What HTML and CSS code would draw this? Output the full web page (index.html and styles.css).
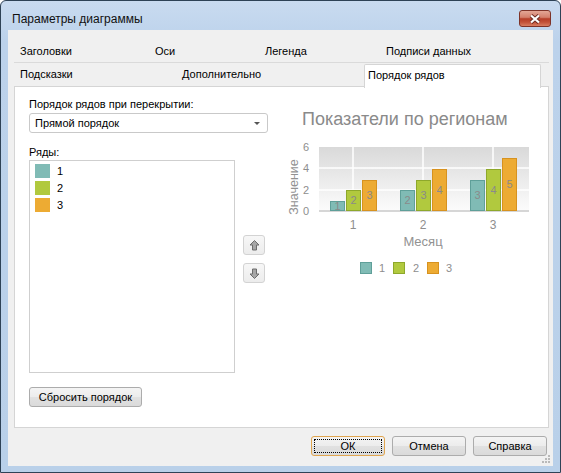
FILE: index.html
```html
<!DOCTYPE html>
<html lang="ru">
<head>
<meta charset="utf-8">
<title>Параметры диаграммы</title>
<link rel="stylesheet" href="styles.css">
</head>
<body>
<div class="window">
  <div class="titlebar">
    <span class="title">Параметры диаграммы</span>
    <button class="close" aria-label="Закрыть">
      <svg width="14" height="10" viewBox="0 0 14 10">
        <path class="x-shadow" d="M3 1.5 L11 8.5 M11 1.5 L3 8.5"/>
        <path class="x-fg" d="M3 1.5 L11 8.5 M11 1.5 L3 8.5"/>
      </svg>
    </button>
  </div>
  <div class="client">
    <div class="tabrow row1">
      <div class="tab">Заголовки</div>
      <div class="tab">Оси</div>
      <div class="tab">Легенда</div>
      <div class="tab">Подписи данных</div>
    </div>
    <div class="tabrow row2">
      <div class="tab">Подсказки</div>
      <div class="tab">Дополнительно</div>
      <div class="tab sel">Порядок рядов</div>
      <div></div>
    </div>
    <div class="panel">
      <div class="leftcol">
        <div class="lbl">Порядок рядов при перекрытии:</div>
        <div class="combo"><span>Прямой порядок</span><span class="arrow"></span></div>
        <div class="lbl lbl2">Ряды:</div>
        <div class="listrow">
          <div class="listbox">
            <div class="item"><span class="sw teal"></span>1</div>
            <div class="item"><span class="sw green"></span>2</div>
            <div class="item"><span class="sw orange"></span>3</div>
          </div>
          <div class="movebtns">
            <button class="mbtn" aria-label="Вверх">
              <svg width="11" height="11" viewBox="0 0 11 11"><polygon class="arr" points="5.5,0.5 10,5 7.5,5 7.5,10 3.5,10 3.5,5 1,5"/></svg>
            </button>
            <button class="mbtn" aria-label="Вниз">
              <svg width="11" height="11" viewBox="0 0 11 11"><polygon class="arr" points="5.5,10.5 10,6 7.5,6 7.5,1 3.5,1 3.5,6 1,6"/></svg>
            </button>
          </div>
        </div>
        <button class="btn reset">Сбросить порядок</button>
      </div>
      <svg class="chart" width="260" height="190" viewBox="0 0 260 190">
        <defs>
          <linearGradient id="pg" x1="0" y1="0" x2="0" y2="1">
            <stop offset="0" stop-color="#d9d9d9"/>
            <stop offset="1" stop-color="#fcfcfc"/>
          </linearGradient>
        </defs>
        <text class="ct" x="17" y="25">Показатели по регионам</text>
        <rect x="34" y="47" width="210" height="64" fill="url(#pg)"/>
        <g class="grid">
          <line x1="34" y1="68" x2="244" y2="68"/>
          <line x1="34" y1="90" x2="244" y2="90"/>
          <line x1="68" y1="47" x2="68" y2="111"/>
          <line x1="138" y1="47" x2="138" y2="111"/>
          <line x1="208" y1="47" x2="208" y2="111"/>
        </g>
        <line class="axis" x1="34" y1="111" x2="244" y2="111"/>
        <g class="ax ya">
          <text x="24" y="51">6</text>
          <text x="24" y="72">4</text>
          <text x="24" y="94">2</text>
          <text x="24" y="115">0</text>
        </g>
        <text class="at yt" transform="translate(12.5,87) rotate(-90)">Значение</text>
        <g class="bars">
          <rect class="b1" x="45.5" y="101.5" width="14" height="9"/>
          <rect class="b2" x="61.5" y="90.5" width="14" height="20"/>
          <rect class="b3" x="77.5" y="80.5" width="14" height="30"/>
          <rect class="b1" x="115.5" y="90.5" width="14" height="20"/>
          <rect class="b2" x="131.5" y="80.5" width="14" height="30"/>
          <rect class="b3" x="147.5" y="69.5" width="14" height="41"/>
          <rect class="b1" x="185.5" y="80.5" width="14" height="30"/>
          <rect class="b2" x="201.5" y="69.5" width="14" height="41"/>
          <rect class="b3" x="217.5" y="58.5" width="14" height="52"/>
        </g>
        <g class="bl">
          <text x="52.5" y="109.5">1</text>
          <text x="68.5" y="104">2</text>
          <text x="84.5" y="99">3</text>
          <text x="122.5" y="104">2</text>
          <text x="138.5" y="99">3</text>
          <text x="154.5" y="93.5">4</text>
          <text x="192.5" y="99">3</text>
          <text x="208.5" y="93.5">4</text>
          <text x="224.5" y="88">5</text>
        </g>
        <g class="ax xa">
          <text x="68" y="129">1</text>
          <text x="138" y="129">2</text>
          <text x="208" y="129">3</text>
        </g>
        <text class="at" x="138" y="145.5">Месяц</text>
        <g class="bars">
          <rect class="b1" x="75.5" y="162.5" width="11" height="11"/>
          <rect class="b2" x="108.5" y="162.5" width="11" height="11"/>
          <rect class="b3" x="142.5" y="162.5" width="11" height="11"/>
        </g>
        <g class="lg">
          <text x="94" y="172">1</text>
          <text x="128" y="172">2</text>
          <text x="161" y="172">3</text>
        </g>
      </svg>
    </div>
    <div class="footer">
      <button class="btn dlg ok">ОК</button>
      <button class="btn dlg">Отмена</button>
      <button class="btn dlg">Справка</button>
    </div>
    <svg class="grip" width="9" height="9" viewBox="0 0 9 9">
      <rect x="7" y="1" width="2" height="2"/>
      <rect x="4" y="4" width="2" height="2"/>
      <rect x="7" y="4" width="2" height="2"/>
      <rect x="1" y="7" width="2" height="2"/>
      <rect x="4" y="7" width="2" height="2"/>
      <rect x="7" y="7" width="2" height="2"/>
    </svg>
  </div>
</div>
</body>
</html>
```

FILE: styles.css
```css
* { box-sizing: border-box; }

html, body {
  margin: 0;
  padding: 0;
}

body {
  width: 561px;
  height: 473px;
  overflow: hidden;
  font-family: "Liberation Sans", Arial, sans-serif;
  font-size: 11px;
  color: #000;
  background: #fff;
}

.window {
  width: 561px;
  height: 473px;
  border: 1px solid #2e4256;
  border-radius: 6px 6px 0 0;
  background: linear-gradient(#c9dbf0 0px, #bcd2eb 40px, #b9d0e9 100%);
  padding: 0 7px 6px 7px;
  display: flex;
  flex-direction: column;
}

.titlebar {
  height: 29px;
  flex: none;
  display: flex;
  align-items: flex-start;
  justify-content: space-between;
}

.title {
  font-size: 12px;
  line-height: 15px;
  margin-top: 11px;
  margin-left: 4px;
  color: #111;
}

.close {
  margin-top: 9px;
  margin-right: 2px;
  width: 32px;
  height: 17px;
  padding: 0;
  border: 1px solid #7e3328;
  border-radius: 3px;
  background: linear-gradient(#e3a695 0%, #d4806c 42%, #b63e28 52%, #c3533a 75%, #d87e62 100%);
  display: flex;
  align-items: center;
  justify-content: center;
}

.x-shadow {
  fill: none;
  stroke: #6b2b22;
  stroke-width: 4;
}

.x-fg {
  fill: none;
  stroke: #ffffff;
  stroke-width: 2.2;
}

.client {
  flex: 1;
  position: relative;
  background: #f0f0f0;
  padding: 10px 4px 10px 6px;
  display: flex;
  flex-direction: column;
}

.tabrow {
  display: grid;
  height: 23px;
  flex: none;
}

.row1 {
  grid-template-columns: 135px 110px 121px 1fr;
  border-bottom: 1px solid #dadada;
}

.row2 {
  grid-template-columns: 162px 188px 177px 1fr;
}

.tab {
  padding-left: 6px;
  line-height: 22px;
  white-space: nowrap;
}

.row2 .tab {
  line-height: 23px;
}

.row2 .tab.sel {
  position: relative;
  z-index: 1;
  margin-top: 1px;
  height: 24px;
  line-height: 21px;
  padding-left: 3px;
  background: #fff;
  border: 1px solid #d5d5d5;
  border-bottom: none;
  border-radius: 2px 2px 0 0;
}

.panel {
  height: 342px;
  flex: none;
  background: #fff;
  border: 1px solid #d5d5d5;
  display: flex;
  align-items: flex-start;
  padding: 11px 0 0 14px;
}

.leftcol {
  width: 239px;
  display: flex;
  flex-direction: column;
  align-items: flex-start;
}

.lbl {
  line-height: 13px;
  white-space: nowrap;
}

.lbl2 {
  margin-top: 13px;
}

.combo {
  margin-top: 2px;
  width: 239px;
  height: 20px;
  border: 1px solid #c9c9c9;
  border-radius: 3px;
  background: #fff;
  display: flex;
  align-items: center;
  justify-content: space-between;
  padding: 0 7px 0 5px;
}

.arrow {
  width: 0;
  height: 0;
  border-left: 3px solid transparent;
  border-right: 3px solid transparent;
  border-top: 3px solid #555;
}

.listrow {
  margin-top: 1px;
  display: flex;
}

.listbox {
  width: 206px;
  height: 213px;
  border: 1px solid #cfcfcf;
  background: #fff;
  padding: 1px 0 0 5px;
}

.item {
  height: 17px;
  display: flex;
  align-items: center;
}

.sw {
  width: 15px;
  height: 14px;
  margin-right: 7px;
}

.teal { background: #80bbb5; }
.green { background: #b1c93e; }
.orange { background: #edab33; }

.movebtns {
  margin-left: 8px;
  padding-top: 75px;
  display: flex;
  flex-direction: column;
  gap: 8px;
}

.mbtn {
  width: 22px;
  height: 20px;
  padding: 0;
  border: 1px solid #d3d3d3;
  border-radius: 3px;
  background: linear-gradient(#f7f7f7, #ececec);
  display: flex;
  align-items: center;
  justify-content: center;
}

.arr {
  fill: #a6a6a6;
  stroke: #6c6c6c;
  stroke-width: 1;
  stroke-linejoin: round;
}

.btn {
  font: inherit;
  color: #000;
  height: 20px;
  padding: 0;
  border: 1px solid #acacac;
  border-radius: 3px;
  background: linear-gradient(#f4f4f4 0%, #ececec 50%, #e1e1e1 51%, #dadada 100%);
}

.reset {
  margin-top: 14px;
  width: 113px;
}

.chart {
  flex: none;
  margin-left: 17px;
  margin-top: 2px;
  display: block;
}

.chart text {
  font-family: "Liberation Sans", Arial, sans-serif;
}

.ct {
  font-size: 18px;
  fill: #8a8a8a;
}

.grid line {
  stroke: #ffffff;
  stroke-width: 1.5;
}

.axis {
  stroke: #d6d6d6;
  stroke-width: 2;
}

.ax {
  font-size: 11px;
  fill: #8e8e8e;
}

.ya {
  text-anchor: end;
}

.xa {
  font-size: 12px;
  text-anchor: middle;
}

.at {
  font-size: 13px;
  fill: #929292;
  text-anchor: middle;
}

.yt {
  font-size: 12.5px;
}

.b1 { fill: #80bbb5; stroke: #5f9f99; stroke-width: 1; }
.b2 { fill: #b1c93e; stroke: #8ea82b; stroke-width: 1; }
.b3 { fill: #edab33; stroke: #d7921f; stroke-width: 1; }

.bl {
  font-size: 11px;
  fill: #8a8a8a;
  text-anchor: middle;
}

.lg {
  font-size: 11px;
  fill: #8e8e8e;
}

.footer {
  margin-top: 8px;
  display: flex;
  justify-content: flex-end;
  gap: 7px;
  padding-right: 2px;
}

.dlg {
  width: 74px;
}

.ok {
  border-color: #e0a54f;
  outline: 1px dotted #000;
  outline-offset: -4px;
}

.grip {
  position: absolute;
  right: 3px;
  bottom: 3px;
  fill: #b9b9b9;
}
```
